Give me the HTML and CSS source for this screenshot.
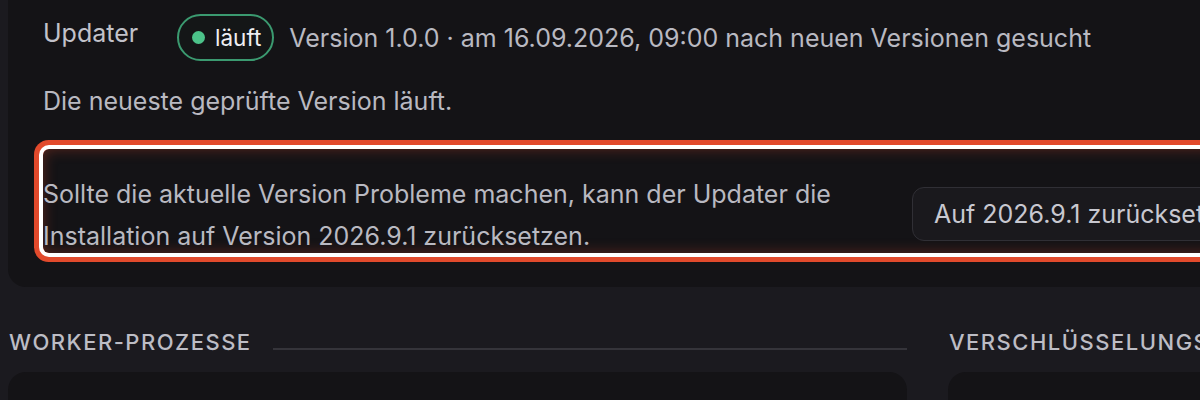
FILE: index.html
```html
<!DOCTYPE html>
<html lang="de">
<head>
<meta charset="utf-8">
<link rel="stylesheet" href="styles.css">
</head>
<body>
<div class="page">
  <section class="card top">
    <div class="row status">
      <div class="label">Updater</div>
      <span class="badge"><span class="dot"></span>läuft</span>
      <span class="meta">Version 1.0.0 · am 16.09.2026, 09:00 nach neuen Versionen gesucht</span>
    </div>
    <p class="note">Die neueste geprüfte Version läuft.</p>
    <div class="rollback">
      <p class="rb-text">Sollte die aktuelle Version Probleme machen, kann der Updater die Installation auf Version 2026.9.1 zurücksetzen.</p>
      <button class="btn">Auf 2026.9.1 zurücksetzen</button>
    </div>
  </section>
  <div class="cols">
    <div class="col">
      <h2 class="sec"><span>Worker-Prozesse</span><i class="rule"></i></h2>
      <div class="card sub"></div>
    </div>
    <div class="col">
      <h2 class="sec"><span>Verschlüsselungsschlüssel</span><i class="rule"></i></h2>
      <div class="card sub"></div>
    </div>
  </div>
</div>
</body>
</html>
```
FILE: styles.css
```css
html, body {
  margin: 0;
  background: #1b1a1f;
  overflow: hidden;
  width: 1200px;
  height: 400px;
}
body {
  font-family: Inter, "Noto Sans", sans-serif;
  color: #b9b9c1;
  font-size: 25px;
  line-height: 30px;
}
.page {
  width: 1839px;
  padding-left: 8px;
}
.card {
  background: #141316;
  border-radius: 18px;
}
.top {
  margin-top: -20px;
  padding: 34px 35px 34px 35px;
}
.row.status {
  display: flex;
  align-items: flex-start;
  height: 47px;
}
.label {
  width: 134px;
  color: #c2c2ca;
  padding-top: 4px;
}
.badge {
  display: inline-flex;
  align-items: center;
  gap: 10px;
  height: 43px;
  padding: 0 11px 0 13px;
  border: 2px solid #3b9a70;
  border-radius: 24px;
  color: #efeff2;
  background: #141617;
  font-size: 22.5px;
}
.dot {
  width: 13px;
  height: 13px;
  border-radius: 50%;
  background: #4cc38a;
}
.meta {
  margin-left: 15px;
  align-self: center;
}
.note {
  margin: 25px 0 0 0;
}
.rollback {
  margin-top: 33px;
  height: 104px;
  display: flex;
  align-items: flex-start;
  border-radius: 6px;
  box-shadow: 0 0 0 4px #ffffff, 0 0 0 9px #e24a2c, inset 0 0 14px rgba(226, 74, 44, 0.35);
}
.rb-text {
  margin: 0;
  width: 869px;
  flex: none;
  line-height: 42px;
  padding-top: 24px;
}
.btn {
  font: inherit;
  color: #c8c8d0;
  background: #1a191d;
  border: 1.5px solid #302f35;
  border-radius: 12px;
  height: 54px;
  padding: 0 21px;
  margin-top: 38px;
  white-space: nowrap;
}
.cols {
  display: grid;
  grid-template-columns: 899px 899px;
  column-gap: 41px;
  margin-top: 39px;
}
.sec {
  display: flex;
  align-items: center;
  gap: 21px;
  margin: 0 0 14px 0;
  font-size: 22px;
  font-weight: 500;
  text-transform: uppercase;
  letter-spacing: 1.5px;
  color: #bdbdc5;
  height: 32px;
  padding-left: 1px;
}
.rule {
  flex: 1;
  height: 2px;
  background: #35343a;
  margin-top: 14px;
}
.sub {
  height: 200px;
}
```
